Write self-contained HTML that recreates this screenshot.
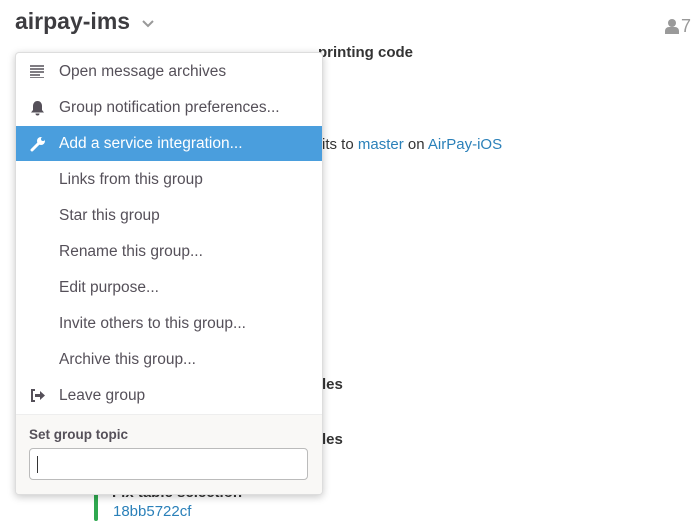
<!DOCTYPE html>
<html><head><style>
body{margin:0;width:700px;height:531px;background:#fff;font-family:"Liberation Sans",sans-serif;position:relative;overflow:hidden}
.a{position:absolute;white-space:nowrap}
.menu{position:absolute;left:15px;top:52px;width:306px;height:441px;background:#fff;border:1px solid #ddd;border-radius:4px;box-shadow:0 2px 8px rgba(0,0,0,.22);overflow:hidden}
.it{position:absolute;left:0;width:306px;height:35px;line-height:35px;font-size:15.5px;color:#555059}
.it span{position:absolute;left:43px}
.hl{background:#4a9edd;color:#fff}
.foot{position:absolute;left:0;top:361px;width:306px;height:80px;background:#f9f8f6;border-top:1px solid #eee}
</style></head><body>
<div class="a" style="left:15px;top:8px;font-size:23px;font-weight:bold;color:#3d3c40">airpay-ims</div>
<svg class="a" style="left:142px;top:20px" width="12" height="8"><path d="M1 1l5 5 5-5" stroke="#999" stroke-width="2" fill="none"/></svg>
<svg class="a" style="left:664px;top:18px" width="16" height="16"><circle cx="8" cy="5" r="4" fill="#9a9a9a"/><path d="M1 16v-3a4 4 0 0 1 4-4h6a4 4 0 0 1 4 4v3z" fill="#9a9a9a"/></svg>
<div class="a" style="left:681px;top:16px;font-size:18px;color:#999">7</div>
<div class="a" style="left:318px;top:44px;font-size:15px;font-weight:bold;color:#333">printing code</div>
<div class="a" style="left:322px;top:136px;font-size:15px;color:#333">its to <span style="color:#2a80b9">master</span> on <span style="color:#2a80b9">AirPay-iOS</span></div>
<div class="a" style="left:322px;top:376px;font-size:15px;font-weight:bold;color:#333">les</div>
<div class="a" style="left:322px;top:431px;font-size:15px;font-weight:bold;color:#333">les</div>
<div class="a" style="left:112px;top:484px;font-size:15px;font-weight:bold;color:#333">Fix table selection</div>
<div class="a" style="left:94px;top:480px;width:4px;height:41px;background:#2fa84f;border-radius:2px"></div>
<div class="a" style="left:113px;top:503px;font-size:15px;color:#2a80b9">18bb5722cf</div>
<div class="menu">
<div class="it" style="top:1px"><svg style="position:absolute;left:14px;top:11px" width="16" height="13"><path d="M0 1h14M0 4h14M0 7h14M0 10h10M0 13h14" stroke="#555059" stroke-width="1.6"/></svg><span>Open message archives</span></div>
<div class="it" style="top:37px"><svg style="position:absolute;left:14px;top:10px" width="15" height="16"><path d="M7.5 1c-3 0-4.5 2.5-4.5 5v4L1 12.5h13L12 10V6c0-2.5-1.5-5-4.5-5z M5.5 13.5a2 2 0 0 0 4 0z" fill="#555059"/></svg><span>Group notification preferences...</span></div>
<div class="it hl" style="top:73px"><svg style="position:absolute;left:14px;top:10px" width="16" height="16"><path d="M2 14L9 7" stroke="#fff" stroke-width="3" stroke-linecap="round"/><circle cx="11" cy="5" r="4" fill="#fff"/><circle cx="13" cy="3" r="2" fill="#4a9edd"/></svg><span>Add a service integration...</span></div>
<div class="it" style="top:109px"><span>Links from this group</span></div>
<div class="it" style="top:145px"><span>Star this group</span></div>
<div class="it" style="top:181px"><span>Rename this group...</span></div>
<div class="it" style="top:217px"><span>Edit purpose...</span></div>
<div class="it" style="top:253px"><span>Invite others to this group...</span></div>
<div class="it" style="top:289px"><span>Archive this group...</span></div>
<div class="it" style="top:325px"><svg style="position:absolute;left:14px;top:11px" width="16" height="13"><path d="M5 1H2v11h3" stroke="#555059" stroke-width="2" fill="none"/><path d="M5 5h5V2l5 4.5-5 4.5V8H5z" fill="#555059"/></svg><span>Leave group</span></div>
<div class="foot">
<div class="a" style="left:13px;top:12px;font-size:13.5px;font-weight:bold;color:#555059">Set group topic</div>
<div class="a" style="left:13px;top:33px;width:277px;height:30px;border:1px solid #bbb;border-radius:4px;background:#fff"><div style="position:absolute;left:7px;top:7px;width:1px;height:17px;background:#333"></div></div>
</div>
</div>
</body></html>
